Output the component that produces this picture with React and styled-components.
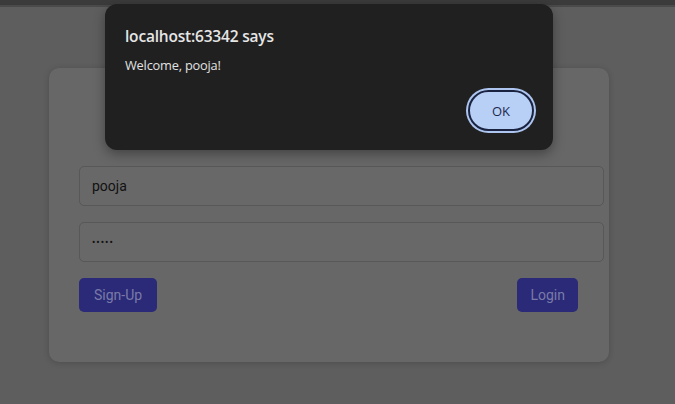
import React from "react";
import styled, { createGlobalStyle } from "styled-components";

const GlobalStyle = createGlobalStyle`
  html, body {
    margin: 0;
    padding: 0;
    background: #5e5e5e;
  }
  * {
    box-sizing: border-box;
  }
`;

const App = () => {
  return (
    <StyledPage>
      <GlobalStyle />
      <StyledTopStrip />
      <StyledMain>
        <StyledCard>
          <StyledInput type='text' defaultValue='pooja' readOnly />
          <StyledInput type='password' defaultValue='pooja' readOnly />
          <StyledActions>
            <StyledButton>Sign-Up</StyledButton>
            <StyledButton $narrow>Login</StyledButton>
          </StyledActions>
        </StyledCard>
      </StyledMain>

      {/* browser alert on top of the dimmed page */}
      <StyledDialog role='alertdialog'>
        <StyledDialogTitle>localhost:63342 says</StyledDialogTitle>
        <StyledDialogMessage>Welcome, pooja!</StyledDialogMessage>
        <StyledDialogFooter>
          <StyledOkButton>OK</StyledOkButton>
        </StyledDialogFooter>
      </StyledDialog>
    </StyledPage>
  );
};

const StyledPage = styled.div`
  position: relative;
  width: 675px;
  height: 404px;
  overflow: hidden;
  background: #5e5e5e;
  font-family: Roboto, "Liberation Sans", sans-serif;
`;

const StyledTopStrip = styled.div`
  height: 7px;
  background: #3b3b3b;
  border-bottom: 2px solid #4a4a4a;
`;

const StyledMain = styled.main`
  padding: 61px 0 0 49px;
`;

const StyledCard = styled.div`
  width: 560px;
  height: 294px;
  padding: 98px 30px 0;
  background: #676767;
  border-radius: 10px;
  box-shadow: 0 1px 6px rgba(0, 0, 0, 0.18);
  display: flex;
  flex-direction: column;
  gap: 16px;
`;

const StyledInput = styled.input`
  width: 525px;
  height: 40px;
  padding: 0 12px;
  background: #686868;
  border: 1px solid #585858;
  border-radius: 5px;
  font-family: Roboto, "Liberation Sans", sans-serif;
  font-size: 14px;
  color: #111;
  outline: none;

  &[type="password"] {
    font-size: 10px;
    letter-spacing: 1px;
  }
`;

const StyledActions = styled.div`
  display: flex;
  justify-content: space-between;
  padding-right: 1px;
`;

const StyledButton = styled.button`
  height: 34px;
  padding: 0 ${(props) => (props.$narrow ? 13 : 15)}px;
  background: #2a2a78;
  border: none;
  border-radius: 5px;
  color: #7a7aa8;
  font-family: Roboto, "Liberation Sans", sans-serif;
  font-size: 14px;
`;

const StyledDialog = styled.div`
  position: absolute;
  top: 4px;
  left: 105px;
  width: 448px;
  height: 146px;
  padding: 21px 17px 17px 20px;
  background: #202020;
  border-radius: 12px;
  box-shadow: 0 4px 12px rgba(0, 0, 0, 0.35);
  display: flex;
  flex-direction: column;
  font-family: "Open Sans", "Noto Sans", sans-serif;
`;

const StyledDialogTitle = styled.h1`
  margin: 0;
  font-size: 15.5px;
  font-weight: 600;
  line-height: 22px;
  color: #e6e6e6;
  letter-spacing: -0.2px;
`;

const StyledDialogMessage = styled.p`
  margin: 10px 0 0;
  font-size: 12.8px;
  line-height: 17px;
  color: #e2e2e2;
  letter-spacing: -0.2px;
`;

const StyledDialogFooter = styled.div`
  margin-top: auto;
  display: flex;
  justify-content: flex-end;
  padding-right: 2px;
  padding-bottom: 2px;
`;

const StyledOkButton = styled.button`
  width: 66px;
  height: 41px;
  border-radius: 21px;
  background: #b8cff6;
  border: 2px solid #1a2440;
  box-shadow: 0 0 0 2px #aec5f0;
  color: #1b2a4e;
  font-family: "Open Sans", "Noto Sans", sans-serif;
  font-size: 13px;
  font-weight: 500;
`;

export default App;
